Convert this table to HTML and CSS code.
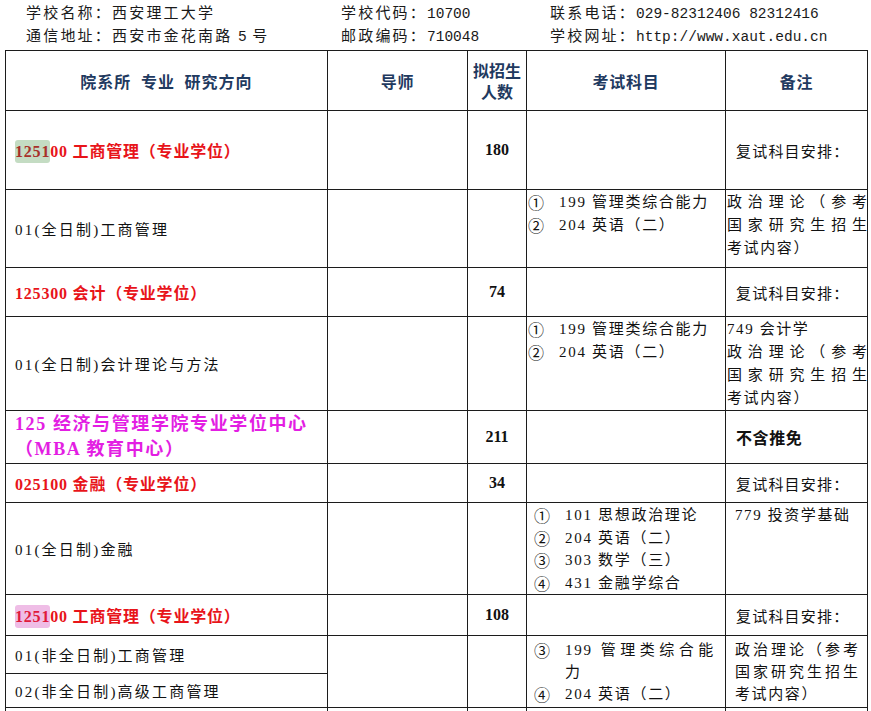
FILE: index.html
```html
<!DOCTYPE html>
<html lang="zh-CN">
<head>
<meta charset="utf-8">
<title>西安理工大学 招生目录</title>
<link rel="stylesheet" href="styles.css">
</head>
<body>
<div class="info">
  <div class="info-col">
    <div class="info-line">学校名称：西安理工大学</div>
    <div class="info-line">通信地址：西安市金花南路 <span class="m">5</span> 号</div>
  </div>
  <div class="info-col">
    <div class="info-line">学校代码：<span class="m">10700</span></div>
    <div class="info-line">邮政编码：<span class="m">710048</span></div>
  </div>
  <div class="info-col">
    <div class="info-line">联系电话：<span class="m">029-82312406 82312416</span></div>
    <div class="info-line">学校网址：<span class="m">http://www.xaut.edu.cn</span></div>
  </div>
</div>

<table class="plan">
  <colgroup>
    <col class="c1"><col class="c2"><col class="c3"><col class="c4"><col class="c5">
  </colgroup>
  <thead>
    <tr class="h-head">
      <th class="th-main">院系所 专业 研究方向</th>
      <th>导师</th>
      <th class="th-num">拟招生<br>人数</th>
      <th>考试科目</th>
      <th>备注</th>
    </tr>
  </thead>
  <tbody>
    <tr class="h79">
      <td class="major"><span class="hl-green">1251</span>00 工商管理（专业学位）</td>
      <td></td>
      <td class="num">180</td>
      <td></td>
      <td class="note-mid">复试科目安排：</td>
    </tr>
    <tr class="h78">
      <td class="dir">01(全日制)工商管理</td>
      <td></td>
      <td></td>
      <td class="subj">
        <div class="it"><span class="ci">①</span>199 管理类综合能力</div>
        <div class="it"><span class="ci">②</span>204 英语（二）</div>
      </td>
      <td class="note">
        <span class="jl">政治理论（参考</span>
        <span class="jl">国家研究生招生</span>
        <span class="ll">考试内容）</span>
      </td>
    </tr>
    <tr class="h49">
      <td class="major">125300 会计（专业学位）</td>
      <td></td>
      <td class="num">74</td>
      <td></td>
      <td class="note-mid">复试科目安排：</td>
    </tr>
    <tr class="h94">
      <td class="dir">01(全日制)会计理论与方法</td>
      <td></td>
      <td></td>
      <td class="subj">
        <div class="it"><span class="ci">①</span>199 管理类综合能力</div>
        <div class="it"><span class="ci">②</span>204 英语（二）</div>
      </td>
      <td class="note">
        <span class="ll">749 会计学</span>
        <span class="jl">政治理论（参考</span>
        <span class="jl">国家研究生招生</span>
        <span class="ll">考试内容）</span>
      </td>
    </tr>
    <tr class="h53">
      <td class="center-name">125 经济与管理学院专业学位中心<br>（MBA 教育中心）</td>
      <td></td>
      <td class="num">211</td>
      <td></td>
      <td class="note-mid strong">不含推免</td>
    </tr>
    <tr class="h39">
      <td class="major">025100 金融（专业学位）</td>
      <td></td>
      <td class="num">34</td>
      <td></td>
      <td class="note-mid">复试科目安排：</td>
    </tr>
    <tr class="h91">
      <td class="dir">01(全日制)金融</td>
      <td></td>
      <td></td>
      <td class="subj subj-in">
        <div class="it"><span class="ci">①</span>101 思想政治理论</div>
        <div class="it"><span class="ci">②</span>204 英语（二）</div>
        <div class="it"><span class="ci">③</span>303 数学（三）</div>
        <div class="it"><span class="ci">④</span>431 金融学综合</div>
      </td>
      <td class="note note-in">
        <span class="ll">779 投资学基础</span>
      </td>
    </tr>
    <tr class="h41">
      <td class="major"><span class="hl-pink">1251</span>00 工商管理（专业学位）</td>
      <td></td>
      <td class="num">108</td>
      <td></td>
      <td class="note-mid">复试科目安排：</td>
    </tr>
    <tr class="h38">
      <td class="dir">01(非全日制)工商管理</td>
      <td rowspan="2"></td>
      <td rowspan="2"></td>
      <td rowspan="2" class="subj subj-in subj-low">
        <div class="it"><span class="ci">③</span><span class="wide">199 管理类综合能</span></div>
        <div class="it"><span class="ci"></span>力</div>
        <div class="it"><span class="ci">④</span>204 英语（二）</div>
      </td>
      <td rowspan="2" class="note note-in note-low">
        <span class="jl">政治理论（参考</span>
        <span class="jl">国家研究生招生</span>
        <span class="ll">考试内容）</span>
      </td>
    </tr>
    <tr class="h34">
      <td class="dir">02(非全日制)高级工商管理</td>
    </tr>
    <tr class="h-tail">
      <td></td><td></td><td></td><td></td><td></td>
    </tr>
  </tbody>
</table>
</body>
</html>
```
FILE: styles.css
```css
html, body {
  margin: 0;
  padding: 0;
  background: #fff;
}
body {
  font-family: "Liberation Serif", "Noto Sans CJK SC", serif;
  color: #111;
  overflow: hidden;
  height: 711px;
}

.info {
  display: grid;
  grid-template-columns: 315px 209px auto;
  padding: 0 0 0 26px;
  margin-bottom: 4px;
  font-family: "Noto Sans CJK SC", sans-serif;
  font-size: 15px;
  letter-spacing: 2.2px;
  line-height: 23px;
  color: #1a1a1a;
}
.info-line {
  height: 23px;
  white-space: nowrap;
}
.info .m {
  font-family: "Liberation Mono", monospace;
  font-size: 14.5px;
  line-height: 1;
  letter-spacing: 0;
}

.plan {
  margin-left: 5px;
  border-collapse: collapse;
  table-layout: fixed;
  width: 862px;
  font-size: 15px;
}
.c1 { width: 322px; }
.c2 { width: 140px; }
.c3 { width: 59px; }
.c4 { width: 199px; }
.c5 { width: 142px; }

.plan th, .plan td {
  border: 1px solid #1c1c1c;
  padding: 0;
  overflow: hidden;
}
.plan th {
  font-family: "Noto Sans CJK SC", sans-serif;
  font-weight: bold;
  font-size: 16px;
  color: #1f3a60;
  letter-spacing: 0.8px;
  vertical-align: middle;
  text-align: center;
}
.plan .th-main {
  letter-spacing: 1px;
  word-spacing: 5px;
}
.plan .th-num {
  line-height: 21px;
  letter-spacing: 0;
}

.h-head { height: 60px; }
.h79 { height: 79px; }
.h78 { height: 78px; }
.h49 { height: 49px; }
.h94 { height: 94px; }
.h53 { height: 53px; }
.h39 { height: 39px; }
.h91 { height: 91px; }
.h41 { height: 41px; }
.h38 { height: 38px; }
.h34 { height: 34px; }
.h-tail { height: 40px; }

.major {
  padding-left: 9px !important;
  color: #e8141a;
  font-weight: bold;
  font-size: 16px;
  letter-spacing: 0.8px;
  vertical-align: middle;
}
.hl-green {
  background: #c4dcc3;
  color: #a8302a;
  border-radius: 3px;
  padding: 3px 0;
}
.hl-pink {
  background: #efbde6;
  color: #e01a3c;
  border-radius: 3px;
  padding: 3px 0;
}

.center-name {
  padding-left: 9px !important;
  color: #e31ee3;
  font-weight: bold;
  font-size: 18px;
  letter-spacing: 1.6px;
  line-height: 25px;
  vertical-align: middle;
}

.dir {
  padding-left: 9px !important;
  vertical-align: middle;
  letter-spacing: 2.2px;
}

.num {
  text-align: center;
  font-weight: bold;
  font-size: 16px;
  vertical-align: middle;
}

.note-mid {
  padding-left: 10px !important;
  vertical-align: middle;
  letter-spacing: 1.2px;
}
.strong {
  font-weight: bold;
  font-size: 16px;
  letter-spacing: 0.6px;
}

.subj {
  vertical-align: top;
  padding: 1px 0 0 1px !important;
  line-height: 23px;
  letter-spacing: 1.7px;
}
.subj .it { height: 23px; }
.subj-in {
  padding-left: 7px !important;
  line-height: 22.5px;
}
.subj-in .it { height: 22.5px; }
.subj-low {
  padding-top: 3px !important;
  padding-right: 10px !important;
  line-height: 22px;
}
.subj-low .it { height: 22px; }
.it {
  white-space: nowrap;
  overflow: visible;
}
.ci {
  display: inline-block;
  width: 31px;
  font-family: "Noto Sans CJK SC", sans-serif;
  font-size: 16px;
  line-height: 1;
  letter-spacing: 0;
  vertical-align: top;
  margin-top: 3px;
}
.wide {
  display: inline-block;
  width: 150px;
  line-height: 1;
  text-align: justify;
  text-align-last: justify;
}

.note {
  vertical-align: top;
  padding: 1px 0 0 1px !important;
  line-height: 23px;
  letter-spacing: 1.6px;
}
.note-in {
  padding-left: 9px !important;
}
.note-low {
  padding-top: 3px !important;
  padding-right: 9px !important;
  line-height: 22px;
}
.jl {
  display: block;
  white-space: nowrap;
  text-align: justify;
  text-align-last: justify;
  letter-spacing: 0;
}
.ll {
  display: block;
  white-space: nowrap;
}
```
